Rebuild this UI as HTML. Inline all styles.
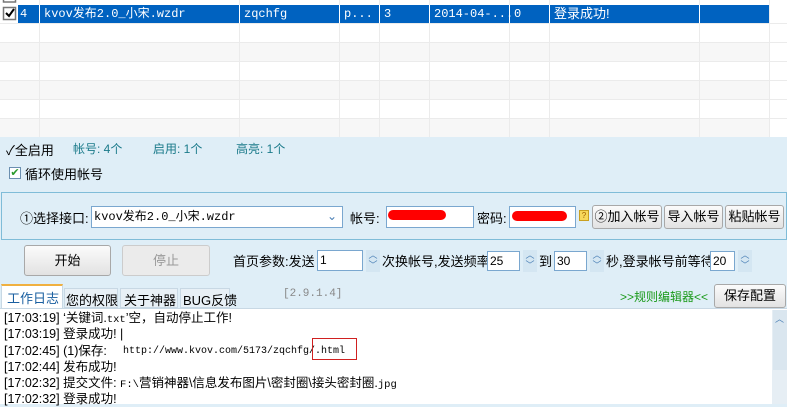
<!DOCTYPE html>
<html><head><meta charset="utf-8"><style>
*{margin:0;padding:0;box-sizing:border-box}
body{width:787px;height:404px;overflow:hidden;background:#dfeef7;font-family:"Liberation Sans","Noto Sans CJK SC",sans-serif;font-size:12px;color:#000;position:relative}
.a{position:absolute;white-space:nowrap}
.mono{font-family:"Liberation Mono","Noto Sans CJK SC",monospace}
.inp{position:absolute;background:#fff;border:1px solid #7aa7cf;height:20px;font-size:12px;line-height:18px;padding-left:2px}
.btn{position:absolute;background:linear-gradient(#fbfbfb,#e2e2e2);border:1px solid #a8a8a8;border-radius:3px;text-align:center;font-size:13px}
.spin{position:absolute;width:14px;height:22px;background:#d4e6f2;color:#4a7fb5;font-size:9px;line-height:10px;text-align:center}
.m10{font-family:"Liberation Mono",monospace;font-size:10.5px}
.lg{position:absolute;left:4px;white-space:nowrap;font-size:12.5px;line-height:16px}
</style></head><body>
<div class="a" style="left:0;top:0;width:787px;height:137px;background:#fff"></div>
<div class="a" style="left:0;top:42px;width:769px;height:19px;background:#f7f7f7"></div>
<div class="a" style="left:0;top:80px;width:769px;height:19px;background:#f7f7f7"></div>
<div class="a" style="left:0;top:118px;width:769px;height:19px;background:#f7f7f7"></div>
<svg class="a" style="left:0;top:0" width="787" height="137">
<g stroke="#ebebeb"><line x1="0" y1="23.5" x2="787" y2="23.5"/><line x1="0" y1="42.5" x2="787" y2="42.5"/><line x1="0" y1="61.5" x2="787" y2="61.5"/><line x1="0" y1="80.5" x2="787" y2="80.5"/><line x1="0" y1="99.5" x2="787" y2="99.5"/><line x1="0" y1="118.5" x2="787" y2="118.5"/>
<line x1="39.5" y1="0" x2="39.5" y2="137"/><line x1="239.5" y1="0" x2="239.5" y2="137"/><line x1="339.5" y1="0" x2="339.5" y2="137"/><line x1="379.5" y1="0" x2="379.5" y2="137"/><line x1="429.5" y1="0" x2="429.5" y2="137"/><line x1="509.5" y1="0" x2="509.5" y2="137"/><line x1="549.5" y1="0" x2="549.5" y2="137"/><line x1="699.5" y1="0" x2="699.5" y2="137"/><line x1="769.5" y1="0" x2="769.5" y2="137"/></g>
<rect x="18" y="5" width="751" height="18" fill="#0062c0"/>
<g stroke="#fff"><line x1="39.5" y1="5" x2="39.5" y2="23"/><line x1="239.5" y1="5" x2="239.5" y2="23"/><line x1="339.5" y1="5" x2="339.5" y2="23"/><line x1="379.5" y1="5" x2="379.5" y2="23"/><line x1="429.5" y1="5" x2="429.5" y2="23"/><line x1="509.5" y1="5" x2="509.5" y2="23"/><line x1="549.5" y1="5" x2="549.5" y2="23"/><line x1="699.5" y1="5" x2="699.5" y2="23"/></g>
<rect x="3.5" y="7.5" width="12" height="12" fill="#fff" stroke="#777" stroke-width="1.5"/>
<path d="M6 13l3 3 5-7" stroke="#000" stroke-width="2" fill="none"/>
<rect x="3.5" y="-6" width="12" height="8" fill="#fff" stroke="#777" stroke-width="1.5"/>
</svg>
<div class="a mono" style="left:20px;top:6px;color:#fff;line-height:16px">4</div>
<div class="a mono" style="left:44px;top:6px;color:#fff;line-height:16px">kvov发布2.0_小宋.wzdr</div>
<div class="a mono" style="left:244px;top:6px;color:#fff;line-height:16px">zqchfg</div>
<div class="a mono" style="left:344px;top:6px;color:#fff;line-height:16px">p...</div>
<div class="a mono" style="left:384px;top:6px;color:#fff;line-height:16px">3</div>
<div class="a mono" style="left:434px;top:6px;color:#fff;line-height:16px">2014-04-...</div>
<div class="a mono" style="left:514px;top:6px;color:#fff;line-height:16px">0</div>
<div class="a" style="left:554px;top:5px;color:#fff;font-size:13px;line-height:17px">登录成功!</div>

<div class="a" style="left:6px;top:140px;font-size:13px">✓全启用</div>
<div class="a" style="left:73px;top:140px;color:#1a7a8a;font-size:12px">帐号: 4个</div>
<div class="a" style="left:153px;top:140px;color:#1a7a8a;font-size:12px">启用: 1个</div>
<div class="a" style="left:236px;top:140px;color:#1a7a8a;font-size:12px">高亮: 1个</div>
<div class="a" style="left:9px;top:167px;width:12px;height:12px;border:1px solid #6b8fb0;background:#fff;color:#2a9a2a;font-size:11px;line-height:10px;text-align:center">✔</div>
<div class="a" style="left:25px;top:164px;font-size:13px">循环使用帐号</div>

<div class="a" style="left:1px;top:192px;width:786px;height:48px;border:1px solid #7fbcd8"></div>
<div class="a" style="left:20px;top:208px;font-size:13px">①选择接口:</div>
<div class="inp mono" style="left:91px;top:206px;width:252px;height:22px;line-height:20px">kvov发布2.0_小宋.wzdr<span style="position:absolute;right:5px;color:#4a7fb5">⌄</span></div>
<div class="a" style="left:350px;top:208px;font-size:13px">帐号:</div>
<div class="inp" style="left:386px;top:206px;width:88px;height:22px"></div>
<div class="a" style="left:388px;top:210px;width:58px;height:10px;background:#f00;border-radius:6px"></div>
<div class="a" style="left:477px;top:208px;font-size:13px">密码:</div>
<div class="inp" style="left:509px;top:206px;width:67px;height:22px"></div>
<div class="a" style="left:512px;top:211px;width:55px;height:10px;background:#f00;border-radius:6px"></div>
<div class="a" style="left:579px;top:210px;width:10px;height:11px;background:#f7d85a;border:1px solid #c9a020;font-size:8px;line-height:9px;text-align:center;color:#a06000">?</div>
<div class="btn" style="left:592px;top:205px;width:70px;height:24px;line-height:22px">②加入帐号</div>
<div class="btn" style="left:664px;top:205px;width:59px;height:24px;line-height:22px">导入帐号</div>
<div class="btn" style="left:725px;top:205px;width:59px;height:24px;line-height:22px">粘贴帐号</div>

<div class="btn" style="left:24px;top:245px;width:87px;height:31px;line-height:29px">开始</div>
<div class="btn" style="left:122px;top:245px;width:88px;height:31px;line-height:29px;color:#999;background:#ebebeb;border-color:#ccc">停止</div>
<div class="a" style="left:233px;top:251px;font-size:13px">首页参数:发送</div>
<div class="inp" style="left:317px;top:250px;width:46px;height:21px">1</div>
<div class="spin" style="left:366px;top:250px">︿<br>﹀</div>
<div class="a" style="left:382px;top:251px;font-size:13px">次换帐号,发送频率</div>
<div class="inp" style="left:487px;top:251px;width:33px;height:20px">25</div>
<div class="spin" style="left:523px;top:250px">︿<br>﹀</div>
<div class="a" style="left:539px;top:251px;font-size:13px">到</div>
<div class="inp" style="left:554px;top:251px;width:33px;height:20px">30</div>
<div class="spin" style="left:590px;top:250px">︿<br>﹀</div>
<div class="a" style="left:606px;top:251px;font-size:13px">秒,登录帐号前等待</div>
<div class="inp" style="left:710px;top:251px;width:25px;height:20px">20</div>
<div class="spin" style="left:738px;top:250px">︿<br>﹀</div>

<div class="a" style="left:1px;top:284px;width:62px;height:24px;background:#fff;border:1px solid #c8d8e4;border-top:2px solid #f0b040;border-bottom:none"></div>
<div class="a" style="left:7px;top:288px;font-size:13px;color:#1a5fa0">工作日志</div>
<div class="a" style="left:64px;top:288px;width:54px;height:20px;background:#e8f0f6;border:1px solid #c8d8e4"></div>
<div class="a" style="left:66px;top:290px;font-size:13px">您的权限</div>
<div class="a" style="left:120px;top:288px;width:58px;height:20px;background:#e8f0f6;border:1px solid #c8d8e4"></div>
<div class="a" style="left:124px;top:290px;font-size:13px">关于神器</div>
<div class="a" style="left:180px;top:288px;width:50px;height:20px;background:#e8f0f6;border:1px solid #c8d8e4"></div>
<div class="a" style="left:183px;top:290px;font-size:13px">BUG反馈</div>
<div class="a mono" style="left:283px;top:288px;color:#888;font-size:11px">[2.9.1.4]</div>
<div class="a" style="left:620px;top:288px;color:#1a9a1a;font-size:12px">&gt;&gt;规则编辑器&lt;&lt;</div>
<div class="btn" style="left:714px;top:284px;width:72px;height:24px;line-height:22px">保存配置</div>

<div class="a" style="left:0;top:308px;width:787px;height:96px;background:#fff;border-top:1px solid #c8d8e4"></div>
<div class="a" style="left:772px;top:310px;width:15px;height:94px;background:#e6eef4"></div>
<div class="a" style="left:773px;top:310px;width:14px;height:60px;background:#dae6ef"></div>
<div class="a" style="left:775px;top:312px;color:#4a7fb5;font-size:9px">︿</div>
<div class="lg" style="top:310px">[17:03:19] ‘关键词.<span class="m10">txt</span>’空，自动停止工作!</div>
<div class="lg" style="top:326px">[17:03:19] 登录成功! |</div>
<div class="lg" style="top:343px">[17:02:45] (1)保存:</div>
<div class="a m10" style="left:123px;top:345px;line-height:14px;font-size:10px">http://www.kvov.com/5173/zqchfg/.html</div>
<div class="a" style="left:312px;top:338px;width:45px;height:22px;border:1px solid #d02020"></div>
<div class="lg" style="top:359px">[17:02:44] 发布成功!</div>
<div class="lg" style="top:375px">[17:02:32] 提交文件: <span class="m10">F:\</span>营销神器\信息发布图片\密封圈\接头密封圈.<span class="m10">jpg</span></div>
<div class="lg" style="top:391px">[17:02:32] 登录成功!</div>
</body></html>
